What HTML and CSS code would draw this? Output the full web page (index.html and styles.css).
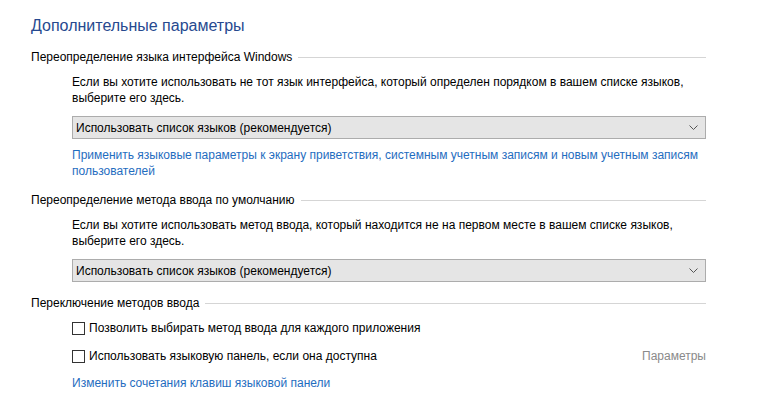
FILE: index.html
```html
<!DOCTYPE html>
<html lang="ru">
<head>
    <meta charset="UTF-8">
    <title>Дополнительные параметры</title>
    <link rel="stylesheet" href="styles.css">
</head>
<body>
    <div class="page">
        <h1 class="title">Дополнительные параметры</h1>

        <div class="group">
            <div class="group-head">
                <span>Переопределение языка интерфейса Windows</span>
                <span class="rule"></span>
            </div>
            <div class="group-body">
                <p class="note">Если вы хотите использовать не тот язык интерфейса, который определен порядком в вашем списке языков, выберите его здесь.</p>
                <div class="select">
                    <span>Использовать список языков (рекомендуется)</span>
                    <svg class="chevron" width="9" height="5" viewBox="0 0 9 5"><polyline points="0.5,0.5 4.5,4.5 8.5,0.5" fill="none" stroke="#555" stroke-width="1"/></svg>
                </div>
                <a class="link apply" href="#">Применить языковые параметры к экрану приветствия, системным учетным записям и новым учетным записям пользователей</a>
            </div>
        </div>

        <div class="group">
            <div class="group-head">
                <span>Переопределение метода ввода по умолчанию</span>
                <span class="rule"></span>
            </div>
            <div class="group-body">
                <p class="note">Если вы хотите использовать метод ввода, который находится не на первом месте в вашем списке языков, выберите его здесь.</p>
                <div class="select">
                    <span>Использовать список языков (рекомендуется)</span>
                    <svg class="chevron" width="9" height="5" viewBox="0 0 9 5"><polyline points="0.5,0.5 4.5,4.5 8.5,0.5" fill="none" stroke="#555" stroke-width="1"/></svg>
                </div>
            </div>
        </div>

        <div class="group">
            <div class="group-head">
                <span>Переключение методов ввода</span>
                <span class="rule"></span>
            </div>
            <div class="group-body">
                <label class="check first">
                    <span class="box"></span>
                    <span>Позволить выбирать метод ввода для каждого приложения</span>
                </label>
                <div class="check-row">
                    <label class="check">
                        <span class="box"></span>
                        <span>Использовать языковую панель, если она доступна</span>
                    </label>
                    <span class="muted">Параметры</span>
                </div>
                <a class="link keys" href="#">Изменить сочетания клавиш языковой панели</a>
            </div>
        </div>
    </div>
</body>
</html>
```

FILE: styles.css
```css
body {
    margin: 0;
    background-color: #fff;
    color: #000;
    font-family: "Liberation Sans", Arial, sans-serif;
    font-size: 12px;
    line-height: 16px;
}
.page {
    width: 675px;
    padding: 14px 0 0 31px;
}
.title {
    margin: 0 0 11px;
    font-size: 16px;
    line-height: 24px;
    font-weight: normal;
    color: #26498f;
}
.group-head {
    display: flex;
    align-items: center;
}
.rule {
    flex: 1;
    margin-left: 6px;
    border-top: 1px solid #d5d5d5;
}
.group-body {
    padding-left: 41px;
}
.note {
    margin: 9px 0 10px;
}
.select {
    display: flex;
    align-items: center;
    justify-content: space-between;
    height: 21px;
    padding: 0 7px 0 3px;
    background-color: #e5e5e5;
    border: 1px solid #acacac;
}
.link {
    display: block;
    color: #1f6dc0;
    text-decoration: none;
}
.apply {
    margin: 8px -10px 13px 0;
}
.group + .group .select {
    margin-bottom: 13px;
}
.check {
    display: flex;
    align-items: center;
}
.box {
    width: 11px;
    height: 11px;
    margin-right: 4px;
    border: 1px solid #333;
    background-color: #fff;
}
.check.first {
    margin-top: 9px;
}
.check-row {
    display: flex;
    justify-content: space-between;
    margin-top: 12px;
}
.muted {
    color: #8a8a8a;
}
.keys {
    margin-top: 11px;
}
```
